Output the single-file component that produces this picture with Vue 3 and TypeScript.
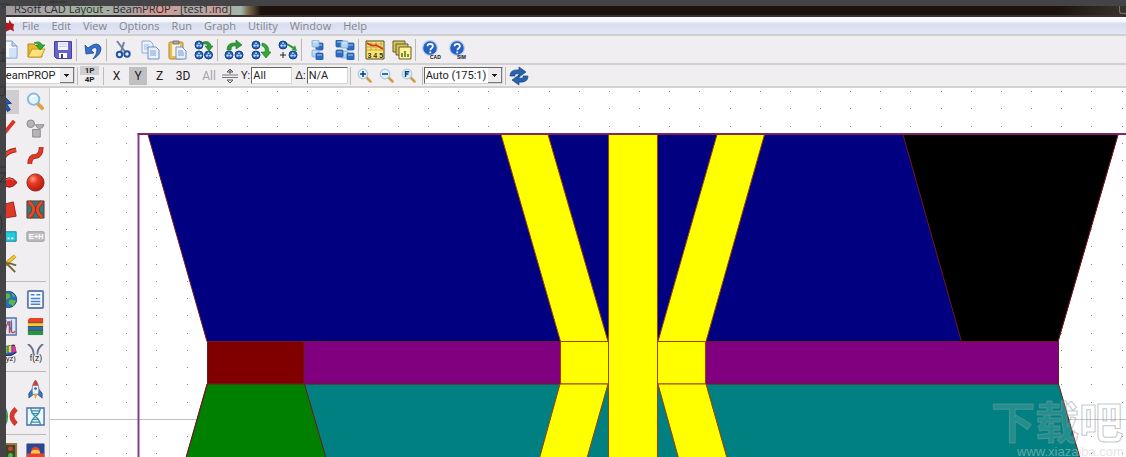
<script setup lang="ts">
import { ref } from 'vue'

type Tool = { name: string; art: string }

const rings = (x: number, y: number): string =>
  `<circle cx="${x}" cy="${y}" r="4" fill="#2563b8" stroke="#123f86"/><circle cx="${x - 1.4}" cy="${y + 0.6}" r="1.2" fill="#c4deff"/><circle cx="${x + 1.6}" cy="${y + 0.6}" r="1.2" fill="#c4deff"/><circle cx="${x}" cy="${y - 1.8}" r=".9" fill="#c4deff"/>`
const block = (x: number, y: number, light = false): string =>
  `<rect x="${x}" y="${y}" width="7" height="7" rx="1" fill="${light ? '#b4d4f3' : '#2d6cc4'}" stroke="${light ? '#7ea8d6' : '#1f56a4'}" stroke-width=".8"/><path d="M${x + 1} ${y + 1}h5v2h-5z" fill="#fff" opacity=".3"/>`
const lens = (mark: string): string =>
  `<path d="M12 12l6 6" stroke="#d69a45" stroke-width="3.4" stroke-linecap="round"/><circle cx="8" cy="8" r="6.4" fill="#dff2fc" stroke="#a3cce6" stroke-width="1.6"/><path d="${mark}" fill="none" stroke="#173c66" stroke-width="2"/>`
const help = (label: string): string =>
  `<circle cx="8" cy="8" r="7.4" fill="#2461c4" stroke="#c3d5ee" stroke-width="1.2"/><path d="M5.500 6.300c0-3.200 5.400-3.200 5.400 0 0 2-2.600 1.800-2.600 4M8.300 11.500v1.800" fill="none" stroke="#fff" stroke-width="1.8"/><text x="8" y="19" font-family="Liberation Sans" font-weight="700" font-size="5" fill="#111">${label}</text>`

const groups: Tool[][] = [
  [
    { name: 'New', art: '<path d="M2 1h11l5 5v12H2z" fill="#f8fbff" stroke="#7d9ccc"/><path d="M13 1v5h5" fill="#bcd0ed" stroke="#7d9ccc"/><path d="M10 8h7v9h-7z" fill="#d4e2f5"/>' },
    { name: 'Open', art: '<path d="M2 17V4h6l2 2h6v11z" fill="#e9b72f" stroke="#b98818"/><path d="M2 17l4-8h13l-4 8z" fill="#ffe27a" stroke="#c8961e"/><path d="M8 3q6-3 8 2h3l-5 5-4-5h3q-1-2-5-2z" fill="#35ab32" stroke="#168018" stroke-width=".7"/>' },
    { name: 'Save', art: '<path d="M1.500 1.500h17v17h-15l-2-2z" fill="#6564c5" stroke="#4140a0"/><path d="M5 2h10v8H5z" fill="#f4f4ff"/><path d="M6 4h8M6 6.500h8" stroke="#c7c7e9"/><path d="M6 13h8v5H6z" fill="#fff"/><path d="M8 14h2v4H8z" fill="#3d3c91"/>' },
  ],
  [{ name: 'Undo', art: '<path d="M2 5l1 9 8-1-3-3q5-5 6 0 0 4-4 9 8-4 8-11Q15 0 5 8z" fill="#3771c7" stroke="#184a93" stroke-width=".8"/>' }],
  [
    { name: 'Cut', art: '<path d="M4 1l9 12M11 2L8 12" stroke="#6c859e" stroke-width="2"/><circle cx="6.500" cy="14.500" r="2.700" fill="#e9f1fc" stroke="#2454a0" stroke-width="2"/><circle cx="14" cy="14" r="2.700" fill="#e9f1fc" stroke="#2454a0" stroke-width="2"/>' },
    { name: 'Copy', art: '<path d="M2 1h8l3 3v9H2z" fill="#eaf1fc" stroke="#91a9d5"/><path d="M4 5h5M4 7h5M4 9h5" stroke="#a6bce0"/><path d="M8 7h8l3 3v9H8z" fill="#eaf1fc" stroke="#6f90ca"/><path d="M10 11h6M10 13h6M10 15h6" stroke="#7da0d4"/>' },
    { name: 'Paste', art: '<rect x="2" y="2" width="14" height="17" rx="1.500" fill="#e8bd54" stroke="#b1842a"/><path d="M5 4h8v12H5z" fill="#fff4cf"/><path d="M6 1h6v3H6z" fill="#a9a9a9" stroke="#777"/><path d="M9 7h6l4 4v8H9z" fill="#eaf1fc" stroke="#7191c8"/><path d="M11 11h5M11 13h6M11 15h6" stroke="#7797cd"/>' },
    { name: 'Duplicate', art: rings(5, 5) + rings(5, 15) + rings(14.5, 15) + '<path d="M9 2q7-2 8 4h2l-4 5-4-5h3q-1-3-5-2z" fill="#2f9b35" stroke="#167324" stroke-width=".6"/>' },
  ],
  [
    { name: 'Flip horizontally', art: rings(5, 15) + rings(15, 15) + '<path d="M3 10q0-8 9-7V0l6 5-6 4V6q-5-1-5 4z" fill="#2f9b35" stroke="#167324" stroke-width=".6"/>' },
    { name: 'Flip vertically', art: rings(5, 5) + rings(5, 15) + '<path d="M11 3q7 1 7 9h2l-5 6-5-6h4q1-5-3-6z" fill="#35a739" stroke="#167324" stroke-width=".6"/>' },
    { name: 'Offset', art: rings(5, 5) + rings(15, 15) + '<path d="M9 3l7 4 1-2 2 6-6-1 2-1-6-4z" fill="#2f9b35"/><path d="M5 12v6M2 15h6" stroke="#222"/>' },
  ],
  [
    { name: 'Bring forward', art: block(8, 3) + block(4, 0, true) + block(4, 10, true) + block(8, 13) },
    { name: 'Arrange', art: block(1, 0) + block(12, 3) + block(6, 1, true) + block(6, 11, true) + block(1, 10) + block(12, 13) },
  ],
  [
    { name: 'Symbol table', art: '<path d="M1 1h18v18H1z" fill="#fbe46a" stroke="#544a24"/><path d="M1 4h18M1 7h18M1 10h18M6 1v9M11 1v9M16 1v9" stroke="#ad984a" stroke-width=".7"/><path d="M2 3q6 4 9 2l7 4" fill="none" stroke="#d63725" stroke-width="1.800"/><text x="2.500" y="17.500" font-family="Liberation Sans" font-size="7" font-weight="700" fill="#333">3 4 5</text>' },
    { name: 'Layers', art: '<g fill="#d9c75c" stroke="#625c2b"><path d="M1 1h12v11H1z"/><path d="M4 4h12v11H4z"/><path d="M7 7h12v12H7z" fill="#fff29b"/></g><path d="M9 17v-4h2v4zM12 17v-6h2v6zM15 17v-3h2v3z" fill="#75923e"/>' },
  ],
  [{ name: 'CAD help', art: help('CAD') }, { name: 'Simulation help', art: help('SIM') }],
]

const zooms: Tool[] = [
  { name: 'Zoom in', art: lens('M8 4v8M4 8h8') },
  { name: 'Zoom out', art: lens('M4 8h8') },
  { name: 'Zoom full', art: lens('M6 12V5h5M6 8h4') },
]

const palette: Tool[][] = [
  [
    { name: 'Select', art: '<path d="M3 0l11 11-5 .5 4 6-3 2-4-7-3 4z" fill="#2359b8" stroke="#12377a"/>' },
    { name: 'Magnify', art: '<path d="M12 12l5 5" stroke="#dfa33f" stroke-width="4" stroke-linecap="round"/><circle cx="8" cy="7.5" r="6" fill="#def5fd" stroke="#88b9dd" stroke-width="2"/><path d="M5 7q1-4 5-3" stroke="#fff" stroke-width="2" fill="none"/>' },
    { name: 'Straight', art: '<path d="M2 18L15 2" stroke="#d93522" stroke-width="4"/>' },
    { name: 'Shapes', art: '<g fill="#b5b5b8" stroke="#88888c"><circle cx="5" cy="5" r="4"/><path d="M10 6h9q-1 4-4.500 4T10 6zM7 11h8v8H7z"/></g>' },
    { name: 'Arc', art: '<path d="M2 18Q3 6 17 4" fill="none" stroke="#9d251a" stroke-width="5"/><path d="M2 18Q3 6 17 4" fill="none" stroke="#e84630" stroke-width="3"/>' },
    { name: 'S-bend', art: '<path d="M4 19q0-8 6-8 6-1 6-10" fill="none" stroke="#9e2117" stroke-width="5"/><path d="M4 19q0-8 6-8 6-1 6-10" fill="none" stroke="#e23b25" stroke-width="3.500"/>' },
    { name: 'Lens', art: '<path d="M1 10q9-10 17 0-8 10-17 0z" fill="#d7291d" stroke="#8b1711"/><path d="M5 8q5-4 9 0" stroke="#ff7960" fill="none"/>' },
    { name: 'Circle', art: '<circle cx="10" cy="10" r="9" fill="url(#ball)" stroke="#9a2018"/>' },
    { name: 'Polygon', art: '<path d="M2 5l12-3 3 15-12 2-4-7z" fill="#e23826" stroke="#9a2018"/>' },
    { name: 'Crossing', art: '<path d="M1 1h18v18H1z" fill="#2d7d79" stroke="#78302b"/><path d="M3 2q5 4 5 8t-5 8M17 2q-5 4-5 8t5 8" fill="none" stroke="#8c2a1c" stroke-width="4.500"/><path d="M3 2q5 4 5 8t-5 8M17 2q-5 4-5 8t5 8" fill="none" stroke="#e8492c" stroke-width="3"/>' },
    { name: 'Label', art: '<path d="M2 5h15v10H2z" fill="#25c9dc" stroke="#13889b"/><path d="M4 12h2m2 0h2m2 0h2" stroke="#fff" stroke-width="2"/>' },
    { name: 'Fields', art: '<rect x="1" y="5" width="18" height="10" rx="1" fill="#bfbfc2" stroke="#97979a"/><text x="3" y="13" font-family="Liberation Sans" font-weight="700" font-size="8" fill="#fff">E+H</text>' },
    { name: 'Measure', art: '<path d="M1 15L16 2" stroke="#b98f1d" stroke-width="4"/><path d="M1 15L16 2" stroke="#efc63a" stroke-width="2.500"/><path d="M1 10q7-2 16 2M7 10l9 9" fill="none" stroke="#756638" stroke-width="2"/>' },
  ],
  [
    { name: 'Global', art: '<circle cx="9" cy="10" r="8.500" fill="#2273be" stroke="#164984"/><path d="M4 3l6 1 1 4-5 2-3-2zM10 10l7 1-3 6-5-3zM12 3l4 3-2 2z" fill="#66b33e"/>' },
    { name: 'Symbols', art: '<rect x="2" y="1" width="16" height="18" rx="1" fill="#f4f9ff" stroke="#657fac" stroke-width="2"/><path d="M5 5h4m2 0h4M5 9h10M5 12h10M5 15h10" stroke="#4f83c8" stroke-width="1.600"/>' },
    { name: 'Plot', art: '<path d="M1 1h16v18H1z" fill="#d9e9fa" stroke="#5573a9" stroke-width="1.500"/><path d="M5 17q2-12 5-12v12M12 5v10q1 3 4 0" fill="none" stroke="#c3454d" stroke-width="1.600"/><path d="M2 4h5l5 10V3" fill="none" stroke="#416fb8"/>' },
    { name: 'Materials', art: '<path d="M2 3l2-2h14v5H2z" fill="#e84029"/><path d="M2 6h16v4H2z" fill="#ffc627"/><path d="M2 10h16v4H2z" fill="#2d69b9"/><path d="M2 14h16v5H2z" fill="#249543"/><path d="M2 6h16M2 10h16M2 14h16" stroke="#4d4b43"/>' },
    { name: 'Index profile', art: '<path d="M4 3l11-2 2 8-5 3H3z" fill="#3248d0" stroke="#222"/><path d="M5 3l3-1v8H4z" fill="#5bcf35"/><path d="M9 2l3-1v8H9z" fill="#f1d930"/><path d="M13 2h3l1 6-4 1z" fill="#df35a0"/><text x="2" y="18" font-family="Liberation Sans" font-size="8" fill="#222">xyz)</text>' },
    { name: 'Taper function', art: '<path d="M2 0q6 4 6 11M18 0q-6 4-6 11" fill="none" stroke="#64748d" stroke-width="2"/><text x="4" y="18" font-family="Liberation Sans" font-size="9" fill="#222">f(z)</text>' },
  ],
  [
    { name: 'Blank tool', art: '' },
    { name: 'Launch', art: '<path d="M7 9l-4 5v5l5-4M13 9l4 5v5l-5-4" fill="#3973bd" stroke="#244f8e" stroke-width=".8"/><path d="M10 0Q5 6 7 15h6Q15 6 10 0z" fill="#edf3fa" stroke="#6c85a7"/><path d="M7 6q1-4 3-6 2 2 3 6z" fill="#d13e32"/><circle cx="10" cy="9" r="1.500" fill="#2f72bb"/><path d="M8 15h4l-2 5z" fill="#f5a51d"/>' },
    { name: 'Coupler', art: '<path d="M4 1q5 9 0 18" fill="none" stroke="#2a9c53" stroke-width="4"/><path d="M17 2q-9 8 0 16" fill="none" stroke="#d53830" stroke-width="5"/>' },
    { name: 'Grating', art: '<path d="M1 1h18v18H1z" fill="#effafc" stroke="#4a6ea9" stroke-width="1.500"/><path d="M5 1q0 5 5 9t5 9M15 1q0 5-5 9t-5 9M6 4h8M7 7h6M7 13h6M6 16h8" fill="none" stroke="#2f8fa6" stroke-width="1.400"/>' },
  ],
  [
    { name: 'Monitor', art: '<path d="M1 1h16v18H1z" fill="#38472c" stroke="#9d793f" stroke-width="2"/><circle cx="11" cy="6" r="2.500" fill="#d8402f"/><circle cx="11" cy="13" r="2.500" fill="#49ba3f"/>' },
    { name: 'Simulation', art: '<path d="M1 1h18v18H1z" fill="#29479a" stroke="#364779"/><path d="M1 11h4q0-7 5-7t5 7h4v4H1z" fill="#e5452e"/><path d="M5 11q0-4 5-4t5 4z" fill="#f8c743"/><path d="M1 15h18v4H1z" fill="#459fc5"/>' },
  ],
]

const menus = ['File', 'Edit', 'View', 'Options', 'Run', 'Graph', 'Utility', 'Window', 'Help']
const axes = ['X', 'Y', 'Z', '3D', 'All']
const axis = ref('Y')
const program = ref('BeamPROP')
const scale = ref('Auto (175:1)')
const yCut = ref('All')
const delta = ref('N/A')

const dots = Array.from({ length: 36 * 22 }, (_, i) => ({
  x: Math.round(66 + (i % 36) * 30.16),
  y: Math.round(91 + Math.floor(i / 36) * 17.26),
}))
</script>

<template>
  <div class="desktop">
    <svg class="desk-marks" viewBox="0 0 70 457" aria-hidden="true">
      <path d="M0 4h10M2 7h9M40 1v5M49 2h18M53 0v5M0 53h6M3 48v14M0 61h6M0 87q5-3 5 4t-5 4M0 167h6M0 173l6 0-6 9h6M0 215q4 9 0 19" />
    </svg>
    <main class="window">
      <header class="title"><span>RSoft CAD Layout - BeamPROP - [test1.ind]</span><i class="corner"></i></header>
      <nav class="menu">
        <svg class="app-mark" viewBox="0 0 10 16" aria-hidden="true"><path d="M0 4l3 1 1-4 2 4 3 1-1 4 1 4-4-2-5 2z" fill="#b3191b" /></svg>
        <button v-for="m in menus" :key="m" type="button">{{ m }}</button>
      </nav>
      <div class="bar tools">
        <div v-for="(g, gi) in groups" :key="gi" class="group">
          <button v-for="t in g" :key="t.name" type="button" class="tool" :aria-label="t.name">
            <svg viewBox="0 0 20 20" v-html="t.art"></svg>
          </button>
        </div>
      </div>
      <div class="bar options">
        <select v-model="program" class="program" aria-label="Program"><option>BeamPROP</option></select>
        <i class="rule"></i>
        <button type="button" class="port" aria-label="Pane layout"><b>1P</b><b>4P</b></button>
        <i class="rule"></i>
        <div class="axes">
          <button v-for="a in axes" :key="a" type="button" :class="{ on: axis === a, dim: a === 'All' }" @click="axis = a">{{ a }}</button>
        </div>
        <button type="button" class="step" aria-label="Step position">
          <svg viewBox="0 0 16 16"><path d="M0 7h16M0 9.500h16" stroke="#777" /><path d="M8 1v5M5 4h6M5 12h6M5 4l3-3 3 3M5 12l3 3 3-3" fill="none" stroke="#555" /></svg>
        </button>
        <label for="ycut">Y:</label><input id="ycut" v-model="yCut" type="text" />
        <label for="delta">Δ:</label><input id="delta" v-model="delta" type="text" />
        <i class="rule"></i>
        <div class="zooms">
          <button v-for="z in zooms" :key="z.name" type="button" :aria-label="z.name"><svg viewBox="0 0 20 20" v-html="z.art"></svg></button>
        </div>
        <i class="rule"></i>
        <select v-model="scale" class="scale" aria-label="Scale"><option>Auto (175:1)</option></select>
        <i class="rule"></i>
        <button type="button" class="refresh" aria-label="Refresh">
          <svg viewBox="0 0 20 20"><path d="M1 10Q1 3 10 4V1l7 5-7 5V8Q5 7 6 10zM19 10q0 7-9 6v3l-7-5 7-5v3q5 1 4-2z" fill="#2763ad" stroke="#174681" stroke-width=".7" /></svg>
        </button>
      </div>
      <div class="work">
        <aside class="palette">
          <svg class="defs" aria-hidden="true"><defs><radialGradient id="ball" cx=".35" cy=".3" r=".7"><stop offset="0" stop-color="#ff9a80" /><stop offset=".4" stop-color="#e83a25" /><stop offset="1" stop-color="#b81b12" /></radialGradient></defs></svg>
          <div v-for="(s, si) in palette" :key="si" class="section">
            <button v-for="t in s" :key="t.name" type="button" :class="{ held: t.name === 'Select' }" :aria-label="t.name"><svg viewBox="0 0 20 20" v-html="t.art"></svg></button>
          </div>
        </aside>
        <section class="canvas">
          <svg viewBox="50 88 1076 369" preserveAspectRatio="xMinYMin slice" role="img" aria-label="Waveguide layout">
            <g fill="#8a8a8a"><rect v-for="(d, i) in dots" :key="i" :x="d.x" :y="d.y" width="1" height="1" /></g>
            <path d="M50 419.500h1076" stroke="#c4bfc4" />
            <path d="M138.500 457V134h988" fill="none" stroke="#8b3a8b" stroke-width="2" />
            <g stroke="#701820" stroke-width="1">
              <path d="M148 134.500H1118L1058 341.500H207z" fill="#000080" />
              <path d="M903 134.500H1118L1058 341.500H961.500z" fill="#000" />
              <path d="M207.500 341.500H1058.500V384H207.500z" fill="#800080" />
              <path d="M207.500 341.500H304V384H207.500z" fill="#800000" />
              <path d="M207 384H1058.500L1080 458H186z" fill="#008080" />
              <path d="M207.500 384H304.500L326 458H186z" fill="#008000" />
            </g>
            <g fill="#ff0" stroke="#a04000" stroke-width="1">
              <path d="M501 134.500H548L608 341.500H560.500zM717 134.500H764.500L706 341.500H658z" />
              <path d="M560.500 341.500H608.500V384H560.500zM657.500 341.500H705.500V384H657.500z" />
              <path d="M560 384H608L587 458H539.500zM658 384H706L727 458H678.500z" />
              <path d="M608.500 134.500H657.500V458H608.500z" />
            </g>
            <path d="M137.500 134H1126" stroke="#7d206d" stroke-width="1.500" />
            <g class="watermark">
              <text x="991" y="439" class="brand">下载吧</text>
              <text x="1017" y="456" class="site">www.xiazaiba.com</text>
            </g>
          </svg>
        </section>
      </div>
    </main>
  </div>
</template>

<style>
body { margin: 0; background: #444446; }
</style>

<style scoped>
* { box-sizing: border-box; }
.desktop { position: relative; height: 100vh; padding: 6px 0 0 6px; overflow: hidden; background: #444446; font-family: "Open Sans", "Noto Sans", sans-serif; }
.desk-marks { position: absolute; left: 0; top: 0; width: 70px; height: 457px; fill: none; stroke: #303033; }
.window { position: relative; display: flex; flex-direction: column; height: 100%; overflow: hidden; background: #f0eef1; }
button { display: flex; align-items: center; justify-content: center; flex: none; padding: 0; border: 0; background: none; color: inherit; font: inherit; }
svg { display: block; flex: none; }
.title { display: flex; justify-content: space-between; flex: none; height: 11px; overflow: hidden; border-bottom: 2px solid #3a302d; background: linear-gradient(90deg, #9d9c9e 0, #a9a5a7 40px, #a2b69d 80px, #a8a7a9 120px, #d99a92 155px, #aca8a9 185px, #c9a099 212px, #9db8ae 235px, #7d6a4c 242px, #1c130f 255px, #1c130f 94%, #39332d 100%); }
.title span { padding-left: 8px; color: #29292d; font-size: 11px; line-height: 10px; margin-top: -2px; white-space: nowrap; }
.corner { width: 7px; height: 8px; border: 1px solid #77736a; border-width: 0 0 1px 1px; border-radius: 0 0 0 3px; }
.menu { display: flex; align-items: center; gap: 12px; flex: none; height: 19px; border-bottom: 2px solid #cfcfcf; background: linear-gradient(#fdfdff 0, #f3f5fc 5px, #d9dff0 6px, #e1e4f4 17px); color: #858589; font-size: 11px; }
.app-mark { width: 9px; height: 16px; margin-right: -5px; }
.bar { display: flex; align-items: center; flex: none; border-bottom: 2px solid #d1d1cf; background: #f0eef1; }
.tools { height: 29px; }
.tools::before { content: ""; width: 1px; margin-right: -12px; }
.group { display: flex; align-items: center; }
.group + .group { border-left: 1px solid #b9b9bc; padding-left: 2px; }
.tool { width: 27px; height: 22px; }
.tool svg { width: 20px; height: 20px; }
.options { height: 23px; font-family: Roboto, "Liberation Sans", sans-serif; font-size: 11px; color: #222; }
.rule { flex: none; width: 1px; height: 18px; margin: 0 2px; background: #bcbcbf; }
select, input { height: 17px; border: 1px solid #d5d5d5; border-top-color: #666; border-left-color: #666; border-radius: 0; background: #fff; color: #222; font: inherit; outline: 0; }
select { flex: none; appearance: none; padding: 0 14px 0 1px; background: linear-gradient(#222, #222) right 5px top 6px / 5px 1px no-repeat, linear-gradient(#222, #222) right 6px top 7px / 3px 1px no-repeat, linear-gradient(#222, #222) right 7px top 8px / 1px 1px no-repeat, linear-gradient(#777, #777) right 0 top 0 / 1px 15px no-repeat, linear-gradient(#777, #777) right 0 bottom 0 / 14px 1px no-repeat, linear-gradient(#eeecef, #eeecef) right 0 top 0 / 14px 15px no-repeat, #fff; }
.program { width: 81px; margin-left: -12px; padding-left: 4px; }
.scale { width: 79px; }
.port { flex-direction: column; width: 19px; margin-right: 2px; }
.port b { width: 19px; font-size: 8px; line-height: 10px; }
.port b:first-child { background: #cfcfd2; line-height: 9px; }
.axes { display: flex; align-items: center; }
.axes button { width: 21px; height: 18px; font-size: 12px; }
.axes button.on { width: 18px; background: #c0bfc2; margin: 0 2px; }
.axes button:nth-child(n + 4) { width: 26px; }
.axes .dim { color: #a4a3a6; }
.step { width: 16px; }
.step svg { width: 16px; height: 16px; }
.options label { margin: 0 1px 0 3px; }
.options input { width: 41px; padding: 0 1px; }
.zooms { display: flex; padding-left: 1px; }
.zooms button { width: 22px; }
.zooms svg { width: 15px; height: 15px; }
.scale { margin-left: -1px; }
.refresh { margin-left: 1px; }
.refresh svg { width: 20px; height: 20px; }
.work { display: flex; flex: 1; min-height: 0; }
.palette { position: relative; flex: none; width: 44px; overflow: hidden; border-right: 1px solid #cfcfd2; }
.defs { position: absolute; width: 0; height: 0; }
.section { display: grid; grid-template-columns: 26px 26px; grid-auto-rows: 27px; margin-left: -10px; }
.section + .section { margin: 4px 3px 0 -10px; padding-top: 4px; border-top: 1px solid #bbbbbe; }
.section svg { width: 19px; height: 19px; }
.section .held { height: 24px; margin-top: 2px; margin-right: 3px; background: #cfcdd0; }
.canvas { flex: 1; min-width: 0; background: #fff; }
.canvas svg { width: 100%; height: 100%; }
.watermark { fill: #fff; fill-opacity: .12; stroke: #8b9898; stroke-opacity: .55; stroke-width: 1; }
.brand { font: 700 44px "Noto Sans CJK SC", sans-serif; }
.site { font: 13px "Liberation Sans", sans-serif; fill: #ccc; fill-opacity: .5; stroke-width: 0; }
</style>
